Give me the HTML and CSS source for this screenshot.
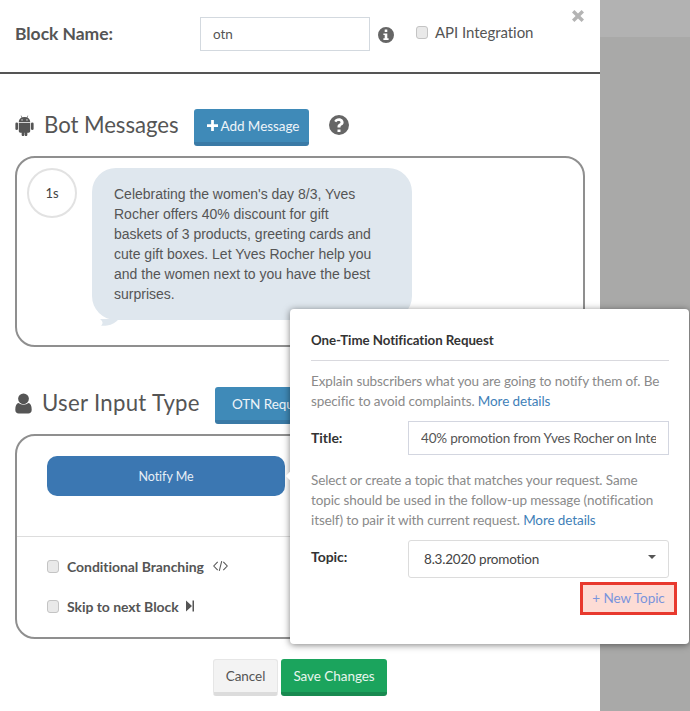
FILE: index.html
```html
<!DOCTYPE html>
<html>
<head>
    <title>Edit Block</title>
    <link rel="stylesheet" href="styles.css">
</head>
<body>
    <div class="page">
        <div class="modal">
            <svg class="close-icon" viewBox="0 0 14 14"><path d="M1 3.4 3.4 1 7 4.6 10.6 1 13 3.4 9.4 7 13 10.6 10.6 13 7 9.4 3.4 13 1 10.6 4.6 7z"/></svg>

            <div class="block-row">
                <label class="block-label">Block Name:</label>
                <input class="block-input" type="text" value="otn">
                <svg class="info-icon" viewBox="0 0 16 16"><path fill-rule="evenodd" d="M8 0a8 8 0 1 1 0 16A8 8 0 0 1 8 0zM6.7 2.6v2.3h2.6V2.6zM5.4 6.4v1.5h1.3v3.4H5.4v1.6h5.2v-1.6H9.3V6.4z"/></svg>
                <label class="api-check"><input type="checkbox" class="check"> API Integration</label>
            </div>

            <div class="section-head">
                <svg class="android-icon" viewBox="0 0 20 22"><path fill-rule="evenodd" d="M4 7.3C4 5 5.300 3.400 7 2.600L6 .8l.5-.3 1 1.900a7 7 0 0 1 5 0l1-1.900.5.3-1 1.800c1.700.8 3 2.400 3 4.700zM7.400 4.400a.7.7 0 1 0 0 1.400.7.7 0 0 0 0-1.400zm5.200 0a.7.7 0 1 0 0 1.400.7.7 0 0 0 0-1.400z"/><path d="M4 8h12v9a1.500 1.500 0 0 1-1.500 1.500H13v2.300a1.400 1.400 0 0 1-2.800 0v-2.300H9.800v2.300a1.400 1.400 0 0 1-2.800 0v-2.300H5.500A1.500 1.500 0 0 1 4 17z"/><rect x=".4" y="7.800" width="2.800" height="8" rx="1.400"/><rect x="16.800" y="7.800" width="2.800" height="8" rx="1.400"/></svg>
                <h2 class="section-title">Bot Messages</h2>
                <button class="btn btn-blue add-btn"><svg class="plus-icon" viewBox="0 0 12 12"><path d="M4.500 0h3v4.500H12v3H7.500V12h-3V7.500H0v-3h4.500z"/></svg>Add Message</button>
                <svg class="help-icon" viewBox="0 0 20 20"><path fill-rule="evenodd" d="M10 0a10 10 0 1 1 0 20 10 10 0 0 1 0-20zM8.500 14.500v2.600h3v-2.600zM10 3.300c-2.300 0-3.700 1-4.700 2.600l1.900 1.400c.7-.9 1.300-1.400 2.500-1.400 1 0 1.800.5 1.800 1.300 0 .8-.6 1.200-1.500 1.700-1 .6-1.500 1.300-1.500 2.500v1.100h3v-.8c0-.6.400-.9 1.200-1.400 1.100-.6 1.900-1.400 1.900-2.900 0-2.500-2.300-4.100-4.600-4.100z"/></svg>
            </div>

            <div class="card msg-card">
                <div class="delay">1s</div>
                <div class="bubble">
                    Celebrating the women's day 8/3, Yves Rocher offers 40% discount for gift baskets of 3 products, greeting cards and cute gift boxes. Let Yves Rocher help you and the women next to you have the best surprises.
                    <svg class="bubble-tail" viewBox="0 0 20 8"><path d="M0 0h19C16 3 12 6 7 6.500 5 6.800 3 7 1 6.500 3 5 3.500 3 0 0z"/></svg>
                </div>
            </div>

            <div class="section-head user-head">
                <svg class="user-icon" viewBox="0 0 18 22"><circle cx="9" cy="6" r="5.700"/><path d="M4 10.500c1.300 1 3 1.700 5 1.700s3.700-.7 5-1.700c2.500.3 3.700 2.700 3.700 7 0 2.600-1.500 4-3.600 4H3.900C1.800 21.500.3 20.100.3 17.500c0-4.300 1.200-6.700 3.700-7z"/></svg>
                <h2 class="section-title">User Input Type</h2>
                <button class="btn btn-blue otn-btn">OTN Request</button>
            </div>

            <div class="card input-card">
                <div class="notify-btn">Notify Me</div>
                <div class="options">
                    <label class="option"><input type="checkbox" class="check"> Conditional Branching
                        <svg class="code-icon" viewBox="0 0 16 12"><path d="M5 1.500.8 6 5 10.500M11 1.500 15.200 6 11 10.500M9.300.8 6.700 11.200"/></svg>
                    </label>
                    <label class="option"><input type="checkbox" class="check"> Skip to next Block
                        <svg class="skip-icon" viewBox="0 0 8 12"><path d="M0 .5 6 6 0 11.500zM6.500 .5h1.500v11H6.500z"/></svg>
                    </label>
                </div>
            </div>

            <div class="footer">
                <button class="btn btn-gray">Cancel</button>
                <button class="btn btn-green">Save Changes</button>
            </div>
        </div>
        <div class="backdrop">
            <div class="backdrop-top"></div>
        </div>

        <div class="popover">
            <h3 class="pop-title">One-Time Notification Request</h3>
            <p class="pop-text">Explain subscribers what you are going to notify them of. Be specific to avoid complaints. <a href="#">More details</a></p>
            <div class="pop-row title-row">
                <label class="pop-label">Title:</label>
                <input class="pop-input" type="text" value="40% promotion from Yves Rocher on International Women's Day">
            </div>
            <p class="pop-text second">Select or create a topic that matches your request. Same topic should be used in the follow-up message (notification itself) to pair it with current request. <a href="#">More details</a></p>
            <div class="pop-row topic-row">
                <label class="pop-label">Topic:</label>
                <div class="pop-select">8.3.2020 promotion<span class="caret"></span></div>
            </div>
            <div class="new-topic-row">
                <a class="new-topic" href="#">+ New Topic</a>
            </div>
        </div>
    </div>
</body>
</html>
```
FILE: styles.css
```css
html, body {
    margin: 0;
    height: 100%;
    overflow: hidden;
}

body {
    font-family: Lato, "Noto Sans", sans-serif;
    font-size: 13.500px;
    letter-spacing: -0.05px;
    color: #555;
}

.page {
    position: relative;
    display: flex;
    height: 711px;
    background: #a9a9a8;
}

.modal {
    position: relative;
    width: 600px;
    height: 711px;
    flex: none;
    background: #fff;
}

.backdrop {
    flex: 1;
}

.backdrop-top {
    height: 37px;
    background: #b2b2b2;
}

.close-icon {
    position: absolute;
    right: 15px;
    top: 9px;
    width: 14px;
    height: 14px;
    fill: #b4b4b4;
}

/* top row */
.block-row {
    display: flex;
    align-items: center;
    height: 72px;
    padding-left: 15px;
    border-bottom: 2px solid #555;
    box-sizing: content-box;
}

.block-label {
    width: 185px;
    font-size: 17.500px;
    font-weight: 700;
    margin-top: -5px;
}

.block-input {
    box-sizing: border-box;
    width: 170px;
    height: 34px;
    margin-top: -4px;
    padding: 0 12px;
    border: 1px solid #d3d9df;
    font: inherit;
    letter-spacing: inherit;
    color: #555;
    outline: none;
}

.info-icon {
    width: 16px;
    height: 16px;
    margin: 0 0 3px 8px;
    fill: #666;
}

.api-check {
    display: flex;
    align-items: center;
    gap: 7px;
    margin: -8px 0 0 22px;
    font-size: 15px;
    white-space: nowrap;
}

.check {
    appearance: none;
    box-sizing: border-box;
    width: 12px;
    height: 13px;
    margin: 0;
    flex: none;
    border: 1px solid #c4c4c4;
    border-radius: 3px;
    background: #e9e9e9;
}

/* section headers */
.section-head {
    display: flex;
    align-items: center;
    height: 37px;
    margin-top: 35px;
    padding-left: 15px;
}

.android-icon {
    width: 19px;
    height: 21px;
    flex: none;
    margin-top: -4px;
    fill: #555;
}

.section-title {
    margin: -6px 15px 0 10px;
    font-size: 22.200px;
    font-weight: 400;
    white-space: nowrap;
    color: #555;
}

.help-icon {
    width: 20px;
    height: 20px;
    margin: -6px 0 0 20px;
    fill: #666;
}

.user-head {
    margin-top: 40px;
}

.user-head .section-title {
    letter-spacing: 0.3px;
}

.user-icon {
    width: 17px;
    height: 21px;
    flex: none;
    fill: #555;
    margin-top: -4px;
}

/* buttons */
.btn {
    height: 37px;
    padding: 0 13px;
    border: none;
    border-radius: 3px;
    font-family: inherit;
    font-size: 13.500px;
    letter-spacing: inherit;
    white-space: nowrap;
    cursor: pointer;
}

.btn-blue {
    flex: none;
    background: #3f8ab8;
    border-bottom: 4px solid #3a7aa6;
    color: #eef4f8;
}

.add-btn {
    display: flex;
    align-items: center;
    width: 115px;
}

.otn-btn {
    padding: 0 17px;
}

.plus-icon {
    width: 11px;
    height: 11px;
    flex: none;
    margin-right: 3px;
    fill: #fff;
}

.btn-gray {
    width: 65px;
    padding: 0;
    background: #f3f3f3;
    border: 1px solid #e6e6e6;
    border-bottom: 4px solid #dcdcdc;
    color: #555;
}

.btn-green {
    width: 106px;
    padding: 0;
    background: #1ba45d;
    border-bottom: 4px solid #188a50;
    color: #e8f6ee;
}

/* cards */
.card {
    box-sizing: border-box;
    width: 570px;
    margin: 10px 0 0 15px;
    border: 2px solid #8f8f8f;
    border-radius: 20px;
}

.msg-card {
    display: flex;
    align-items: flex-start;
    gap: 15px;
    height: 191px;
    padding: 10px;
}

.delay {
    box-sizing: border-box;
    width: 50px;
    height: 50px;
    flex: none;
    border: 2px solid #e2e2e2;
    border-radius: 50%;
    font-size: 13px;
    line-height: 46px;
    text-align: center;
    color: #444;
}

.bubble {
    position: relative;
    box-sizing: border-box;
    width: 320px;
    height: 152px;
    padding: 16px 38px 16px 22px;
    border-radius: 24px;
    background: #dfe7ee;
    font-family: "Liberation Sans", Arial, sans-serif;
    font-size: 14px;
    letter-spacing: 0;
    line-height: 20px;
    color: #555;
}

.bubble-tail {
    position: absolute;
    left: 8px;
    bottom: -7px;
    width: 20px;
    height: 8px;
    fill: #dfe7ee;
}

.input-card {
    height: 205px;
    padding-top: 20px;
}

.notify-btn {
    width: 238px;
    height: 40px;
    margin-left: 30px;
    border-radius: 10px;
    background: #3b77b2;
    color: #e8eff6;
    font-size: 12.500px;
    line-height: 41px;
    text-align: center;
}

.options {
    margin-top: 40px;
    padding-top: 9px;
    border-top: 1px solid #ddd;
}

.option {
    display: flex;
    align-items: center;
    gap: 8px;
    height: 40px;
    padding-left: 30px;
    font-weight: 700;
    font-size: 14px;
}

.code-icon {
    width: 15px;
    height: 12px;
    margin-left: 1px;
    fill: none;
    stroke: #555;
    stroke-width: 1.100;
}

.skip-icon {
    width: 8px;
    height: 12px;
    margin-left: -1px;
    fill: #555;
}

.footer {
    display: flex;
    justify-content: center;
    gap: 3px;
    margin-top: 20px;
}

/* popover */
.popover {
    position: absolute;
    left: 290px;
    top: 309px;
    box-sizing: border-box;
    width: 399px;
    height: 335px;
    padding: 0 20px 0 21px;
    border-radius: 4px;
    background: #fff;
    box-shadow: 0 1px 7px rgba(0, 0, 0, 0.5);
}

.popover::before {
    content: "";
    position: absolute;
    left: -3px;
    top: 164px;
    width: 6px;
    height: 6px;
    background: #fff;
    transform: rotate(45deg);
}

.pop-title {
    margin: 0;
    padding: 21px 0 10px;
    line-height: 20px;
    border-bottom: 1px solid #d9d9de;
    font-size: 13.300px;
    font-weight: 700;
    color: #333;
}

.pop-text {
    margin: 10px 0 0;
    line-height: 20px;
    letter-spacing: -0.1px;
    color: #8a8a8a;
}

.pop-text a {
    color: #3f7fb8;
    text-decoration: none;
}

.pop-text.second {
    margin-top: 15px;
}

.pop-row {
    display: flex;
    align-items: flex-start;
}

.title-row {
    margin-top: 10px;
}

.topic-row {
    margin-top: 10px;
}

.pop-label {
    width: 97px;
    padding-top: 7px;
    line-height: 20px;
    font-size: 14px;
    font-weight: 700;
    color: #333;
}

.pop-input {
    box-sizing: border-box;
    width: 261px;
    height: 34px;
    padding: 0 12px;
    border: 1px solid #d3d6e0;
    font: inherit;
    letter-spacing: -0.2px;
    color: #555;
    outline: none;
}

.pop-select {
    position: relative;
    box-sizing: border-box;
    width: 261px;
    height: 38px;
    padding-left: 15px;
    border: 1px solid #dcdcdc;
    border-radius: 3px;
    letter-spacing: -0.2px;
    line-height: 37px;
    color: #444;
}

.caret {
    position: absolute;
    right: 12px;
    top: 14px;
    border: 4px solid transparent;
    border-top: 4px solid #555;
    border-bottom: none;
}

.new-topic-row {
    display: flex;
    justify-content: flex-end;
    margin: 4px -8px 0 0;
}

.new-topic {
    box-sizing: border-box;
    width: 97px;
    height: 33px;
    border: 3px solid #e8392e;
    background: #fddcd5;
    color: #7a94dc;
    line-height: 27px;
    text-align: center;
    text-decoration: none;
}
```
